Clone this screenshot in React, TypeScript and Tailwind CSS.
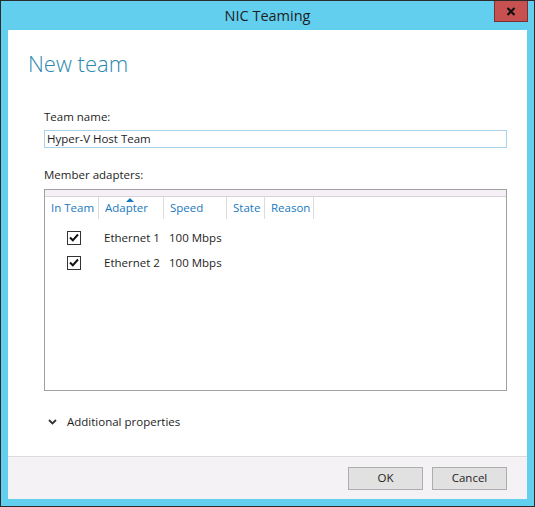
import React from "react";

const columns = [
  { label: "In Team", width: "w-[54px]" },
  { label: "Adapter", width: "w-[65px]", sorted: true },
  { label: "Speed", width: "w-[63px]" },
  { label: "State", width: "w-[38px]" },
  { label: "Reason", width: "w-[49px]" },
];

const adapters = [
  { name: "Ethernet 1", speed: "100 Mbps" },
  { name: "Ethernet 2", speed: "100 Mbps" },
];

const CheckBox = () => (
  <div className="w-[14px] h-[14px] border border-[#333] bg-white flex items-center justify-center">
    <svg width="10" height="9" viewBox="0 0 10 9">
      <path d="M1 4.5 L3.8 7.3 L9 1.5" fill="none" stroke="#111" strokeWidth="2" />
    </svg>
  </div>
);

export default function App() {
  return (
    <div
      className="w-[535px] h-[507px] bg-[#63cfee] border border-[#2b2b2b] flex flex-col px-[7px] pb-[7px] relative text-[11.5px] text-[#1e1e1e]"
      style={{ fontFamily: '"Segoe UI", "Open Sans", "Noto Sans", sans-serif' }}
    >
      {/* title bar */}
      <div className="h-[29px] flex items-center justify-center text-[14.5px] text-[#1e1e1e] pt-[1px]">
        NIC Teaming
      </div>
      <div className="absolute top-0 right-[6px] w-[34px] h-[21px] bg-[#c75050] border border-t-0 border-[#7a3030] flex items-center justify-center">
        <svg width="10" height="9" viewBox="0 0 10 9">
          <path d="M1.5 1 L8.5 8 M8.5 1 L1.5 8" stroke="#111" strokeWidth="2.2" />
        </svg>
      </div>

      {/* body */}
      <div className="flex-1 bg-white flex flex-col">
        <div className="flex-1 flex flex-col">
          <h1 className="text-[22px] font-light text-[#2a88b1] leading-[28px] mt-[19px] ml-[20px]">New team</h1>

          <div className="ml-[36px] mr-[20px] mt-[32px]">
            <div className="leading-[16px]">Team name:</div>
            <div className="mt-[5px] h-[18px] border border-[#a9d3ea] flex items-center px-[2px] leading-[16px]">
              Hyper-V Host Team
            </div>

            <div className="mt-[19px] leading-[16px]">Member adapters:</div>
            <div className="mt-[6px] h-[202px] border border-[#a0a0a0] flex flex-col">
              <div className="h-[7px] bg-[#f5f0f5] border-b border-[#d9d2d9]" />
              <div className="flex h-[22px]">
                {columns.map((c) => (
                  <div
                    key={c.label}
                    className={`${c.width} relative border-r border-[#dcdcdc] text-[#1979c0] flex items-center pl-[6px] whitespace-nowrap`}
                  >
                    {c.sorted && (
                      <svg className="absolute top-[1px] left-[27px]" width="8" height="4" viewBox="0 0 8 4">
                        <path d="M0 4 L4 0 L8 4 Z" fill="#1979c0" />
                      </svg>
                    )}
                    {c.label}
                  </div>
                ))}
              </div>
              <div className="flex flex-col pt-[6px]">
                {adapters.map((a) => (
                  <div key={a.name} className="flex items-center h-[25px]">
                    <div className="w-[59px] flex justify-end pr-[23px]">
                      <CheckBox />
                    </div>
                    <div className="w-[65px]">{a.name}</div>
                    <div>{a.speed}</div>
                  </div>
                ))}
              </div>
            </div>

            <div className="flex items-center mt-[22px]">
              <svg className="ml-[4px]" width="9" height="6" viewBox="0 0 9 6">
                <path d="M1 1 L4.5 4.5 L8 1" fill="none" stroke="#333" strokeWidth="1.8" />
              </svg>
              <span className="ml-[10px]">Additional properties</span>
            </div>
          </div>
        </div>

        {/* footer */}
        <div className="h-[43px] bg-[#f5f2f5] border-t border-[#dcdcdc] flex items-center justify-end gap-[9px] pr-[20px]">
          <button className="w-[75px] h-[23px] bg-[#e1e1e1] border border-[#adadad] text-[#1e1e1e]">OK</button>
          <button className="w-[75px] h-[23px] bg-[#e1e1e1] border border-[#adadad] text-[#1e1e1e]">Cancel</button>
        </div>
      </div>
    </div>
  );
}
